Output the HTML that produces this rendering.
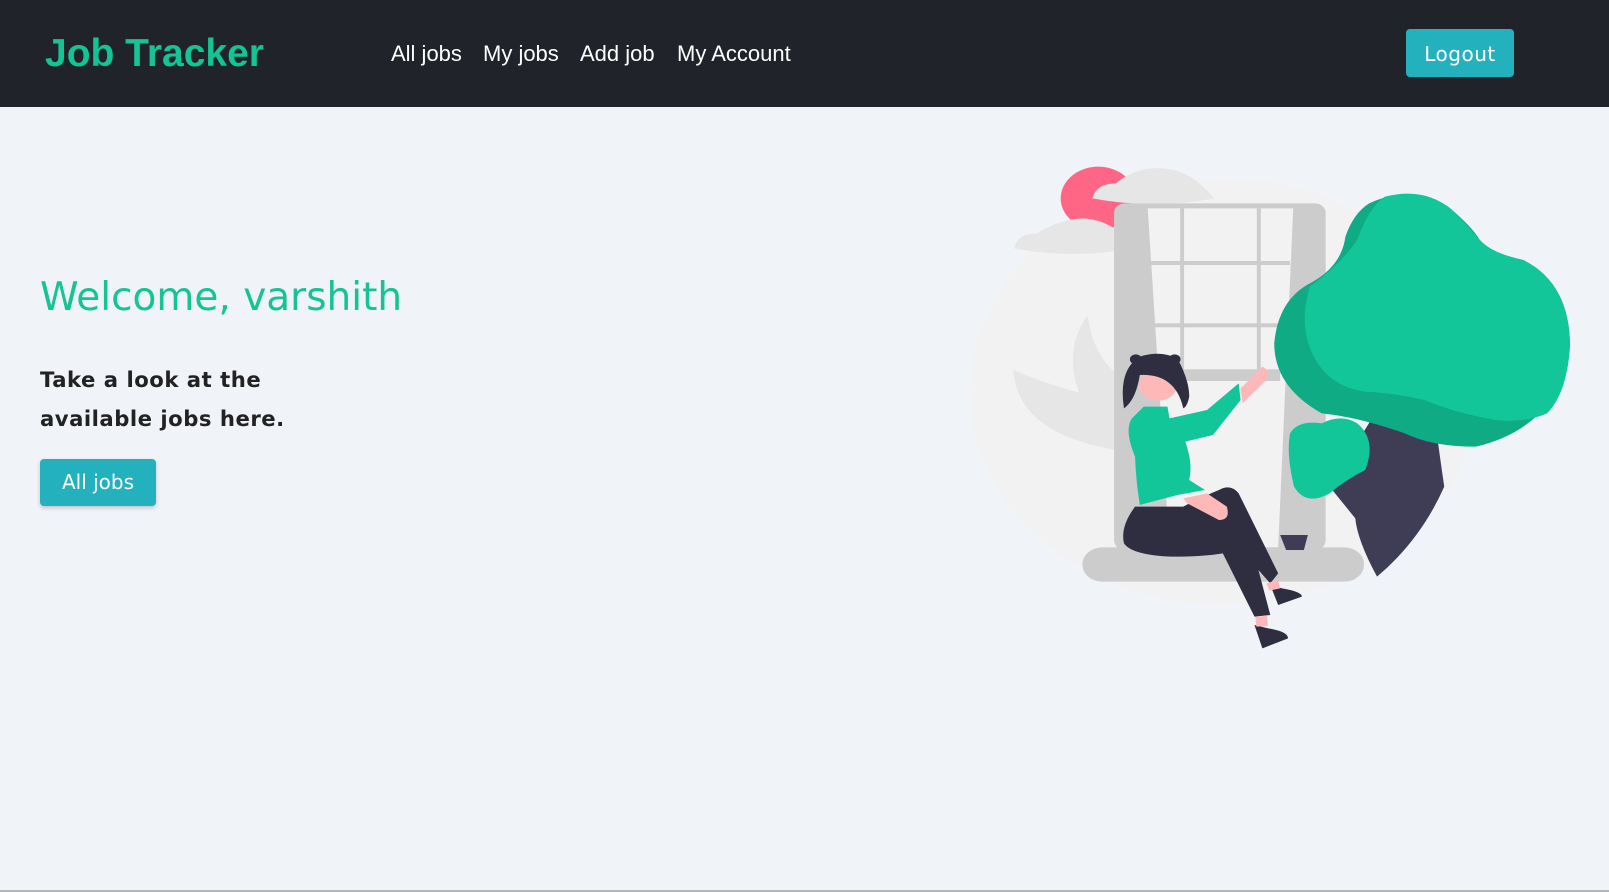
<!DOCTYPE html>
<html><head><meta charset="utf-8"><style>
*{margin:0;padding:0;box-sizing:border-box}
body{width:1609px;height:892px;background:#f0f3f8;font-family:"Liberation Sans",sans-serif;position:relative;overflow:hidden;border-bottom:2px solid #b3b6c2}
.nav{position:absolute;left:0;top:0;width:1609px;height:107px;background:#202329}
.brand{position:absolute;left:45px;top:32px;font-family:"Liberation Sans",sans-serif;font-weight:bold;font-size:39px;color:#14c495}
.nav a{position:absolute;top:41px;color:#fff;font-size:22px;text-decoration:none}
.logout{position:absolute;left:1406px;top:29px;width:108px;height:48px;background:#24b1be;border-radius:4px;color:#fff;font-family:"DejaVu Sans",sans-serif;font-size:20px;text-align:center;line-height:50px;letter-spacing:.5px}
h1{position:absolute;left:40px;top:275px;font-family:"DejaVu Sans",sans-serif;font-weight:normal;font-size:39px;color:#14c495;white-space:nowrap}
p{position:absolute;left:40px;top:360px;font-family:"DejaVu Sans",sans-serif;font-weight:bold;font-size:21.2px;color:#222;line-height:39px;letter-spacing:0.5px}
.btn{position:absolute;left:40px;top:459px;width:116px;height:47px;background:#24b1be;border-radius:4px;color:#fff;font-family:"DejaVu Sans",sans-serif;font-size:20px;text-align:center;line-height:47px;box-shadow:0 2px 4px rgba(0,0,0,.2)}
svg{position:absolute;left:950px;top:140px}
</style></head><body>
<div class="nav">
<div class="brand">Job Tracker</div>
<a style="left:391px">All jobs</a><a style="left:483px">My jobs</a><a style="left:580px">Add job</a><a style="left:677px">My Account</a>
<div class="logout">Logout</div>
</div>
<h1>Welcome, varshith</h1>
<p>Take a look at the<br>available jobs here.</p>
<div class="btn">All jobs</div>
<svg width="620" height="520" viewBox="0 0 1568 1560" preserveAspectRatio="none">
<circle cx="690" cy="755" r="640" fill="#f2f2f2"/>
<circle cx="375" cy="175" r="95" fill="#ff6584"/>
<path d="M360 175 Q370 130 420 130 Q470 80 540 85 Q610 90 668 175 Q520 210 360 175Z" fill="#e6e6e6"/>
<path d="M162 325 Q170 280 220 280 Q280 235 340 235 Q410 240 470 322 Q320 360 162 325Z" fill="#e6e6e6"/>
<path d="M160 690 Q170 880 420 930 L420 780 Q300 760 160 690Z" fill="#e6e6e6"/>
<path d="M348 525 Q280 640 335 780 L420 790 L420 700 Q360 640 348 525Z" fill="#e6e6e6"/>
<rect x="415" y="190" width="535" height="1040" rx="28" fill="#ccc"/>
<polygon points="500,205 868,205 830,1222 555,1222" fill="#f2f2f2"/>
<g fill="#ccc"><rect x="582" y="205" width="10" height="490"/><rect x="776" y="205" width="10" height="490"/><rect x="505" y="363" width="355" height="12"/><rect x="515" y="550" width="330" height="12"/><rect x="525" y="688" width="310" height="35"/></g>
<rect x="335" y="1222" width="712" height="103" rx="50" fill="#ccc"/>
<path d="M1070 830 L1230 870 Q1240 960 1250 1040 Q1190 1200 1080 1310 Q1030 1200 1025 1135 L960 1040 Z" fill="#3f3d56"/>
<path d="M1060 190 Q1170 130 1260 200 Q1320 260 1340 300 Q1370 340 1450 360 Q1568 430 1568 620 Q1540 860 1330 920 Q1220 920 1150 880 Q1030 830 940 820 Q820 740 820 610 Q830 480 910 430 Q990 380 1000 290 Q1020 220 1060 190Z" fill="#0fab84"/>
<path d="M1100 170 Q1200 140 1270 210 Q1320 270 1340 300 Q1370 340 1450 360 Q1568 430 1568 620 Q1560 760 1510 820 Q1450 850 1380 840 Q1280 820 1200 780 Q1130 760 1050 755 Q960 740 920 650 Q880 560 910 440 Q990 370 1030 300 Q1060 200 1100 170Z" fill="#12c69a"/>
<path d="M860 880 Q880 840 940 850 Q990 820 1030 850 Q1080 900 1050 990 Q1000 1020 960 1060 Q900 1100 870 1040 Q850 940 860 880Z" fill="#12c69a"/>
<path d="M468 1100 Q430 1160 440 1210 Q460 1245 560 1250 Q640 1250 690 1240 L770 1430 L810 1425 L780 1290 L810 1330 L830 1300 L730 1060 Q710 1030 680 1050 Q620 1080 590 1100Z" fill="#2f2e41"/>
<path d="M810 1335 L830 1395 L890 1370 Q890 1355 840 1345Z M770 1455 L790 1525 L855 1495 Q855 1475 805 1465Z" fill="#2f2e41"/>
<path d="M800 1330 L830 1320 L835 1345 L808 1352Z M772 1430 L802 1428 L804 1458 L775 1460Z" fill="#ffb8b8"/>
<path d="M490 800 L550 800 L555 835 L650 810 L730 730 L735 780 L665 885 L595 905 Q615 970 605 1020 L645 1050 L575 1065 L480 1095 Q470 1020 468 950 Q440 870 460 835 Z" fill="#12c69a"/>
<path d="M735 745 L790 680 Q810 690 800 720 L740 790Z" fill="#ffb8b8"/>
<path d="M590 1075 L650 1060 L700 1100 Q710 1140 680 1140 L600 1090Z" fill="#ffb8b8"/>
<ellipse cx="526" cy="737" rx="48" ry="45" fill="#ffb8b8"/>
<path d="M440 805 Q425 690 480 650 Q530 630 575 655 Q605 720 605 770 Q600 800 590 805 Q570 700 480 705 Q470 780 440 805Z" fill="#2f2e41"/>
<circle cx="470" cy="658" r="15" fill="#2f2e41"/><circle cx="568" cy="658" r="15" fill="#2f2e41"/>
<path d="M835 1185 L905 1185 L895 1230 L850 1230Z" fill="#3f3d56"/>
</svg>
</body></html>
